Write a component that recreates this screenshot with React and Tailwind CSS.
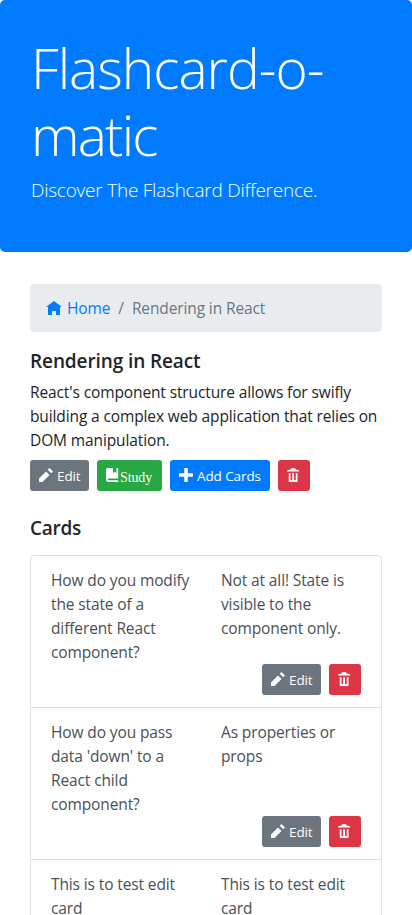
const ICONS = {
  home: "M4 0l-4 3h1v4h2v-2h2v2h2v-4.03l1 .03-4-3z",
  pencil: "M6 0l-1 1 2 2 1-1-2-2zm-2 2l-4 4v2h2l4-4-2-2z",
  book: "M1 0c-.07 0-.13.01-.19.03-.39.08-.7.39-.78.78-.03.06-.03.12-.03.19v5.5c0 .83.67 1.5 1.5 1.5h5.5v-1h-5.5c-.28 0-.5-.22-.5-.5s.22-.5.5-.5h5.5v-5.5c0-.28-.22-.5-.5-.5h-.5v3l-1-1-1 1v-3h-3z",
  plus: "M3 0v3h-3v2h3v3h2v-3h3v-2h-3v-3h-2z",
  trash: "M3 0c-.55 0-1 .45-1 1h-1c-.55 0-1 .45-1 1h7c0-.55-.45-1-1-1h-1c0-.55-.45-1-1-1h-1zm-2 3v4.81c0 .11.08.19.19.19h4.63c.11 0 .19-.08.19-.19v-4.81h-1v3.5c0 .28-.22.5-.5.5s-.5-.22-.5-.5v-3.5h-1v3.5c0 .28-.22.5-.5.5s-.5-.22-.5-.5v-3.5h-1z",
};

function Icon({ name, className }) {
  return (
    <svg viewBox="0 0 8 8" fill="currentColor" className={`shrink-0 ${className}`}>
      <path d={ICONS[name]} />
    </svg>
  );
}

function Button({ icon, label, className, labelClass = "ml-1 mt-0.5 text-[13.5px] tracking-[-0.1px]" }) {
  return (
    <button className={`flex h-[31px] shrink-0 items-start rounded-[3px] pt-1 pl-[9px] text-sm text-white ${className}`}>
      <Icon name={icon} className="mt-1 size-3.5" />
      {label && <span className={`leading-[21px] whitespace-nowrap ${labelClass}`}>{label}</span>}
    </button>
  );
}

const EditButton = () => <Button icon="pencil" label="Edit" className="w-[59px] bg-[#6c757d]" />;
const DeleteButton = () => <Button icon="trash" className="w-8 bg-[#dc3545]" />;

function Lines({ lines }) {
  return lines.map((line) => (
    <span key={line} className="block whitespace-nowrap">{line}</span>
  ));
}

const CARDS = [
  {
    front: ["How do you modify", "the state of a", "different React", "component?"],
    back: ["Not at all! State is", "visible to the", "component only."],
  },
  {
    front: ["How do you pass", "data 'down' to a", "React child", "component?"],
    back: ["As properties or", "props"],
  },
  { front: ["This is to test edit", "card"], back: ["This is to test edit", "card"] },
];

function Card({ front, back }) {
  return (
    <li className="border-b border-[#dfdfdf] px-5 pt-3 pb-3 text-[#495057]">
      <div className="grid h-24 grid-cols-[170px_1fr]">
        <p><Lines lines={front} /></p>
        <p><Lines lines={back} /></p>
      </div>
      <div className="flex justify-end gap-2 tracking-normal">
        <EditButton />
        <DeleteButton />
      </div>
    </li>
  );
}

export default function App() {
  return (
    <div className="h-[915px] overflow-hidden bg-white font-['Open_Sans','Noto_Sans',sans-serif] text-[15.5px] leading-6 tracking-[-0.12px] text-[#212529]">
      <header className="h-[252px] rounded-[5px] bg-[#007bff] px-[31px] pt-[34px] text-white">
        <h1 className="mb-[7px] text-[55px] leading-[67.2px] font-light tracking-[-1px]">
          <span className="block whitespace-nowrap">Flashcard-o-</span>
          <span className="block tracking-[-1.8px] whitespace-nowrap">matic</span>
        </h1>
        <p className="text-[19px] leading-[30px] font-light tracking-[-0.23px]">Discover The Flashcard Difference.</p>
      </header>
      <main className="px-[30px] pt-8">
        <nav className="mb-4 flex h-12 items-center rounded bg-[#e9ecef] px-4">
          <a className="flex items-center text-[#007bff]">
            <Icon name="home" className="mt-0.5 mr-[5px] size-4" />
            Home
          </a>
          <span className="mx-2 text-[#6c757d]">/</span>
          <span className="text-[#6c757d]">Rendering in React</span>
        </nav>
        <h2 className="mb-[7px] pt-px text-[19px] leading-6 font-semibold tracking-[-0.1px]">Rendering in React</h2>
        <p className="mb-2">
          <Lines lines={["React's component structure allows for swifly", "building a complex web application that relies on", "DOM manipulation."]} />
        </p>
        <div className="flex gap-2">
          <EditButton />
          <Button icon="book" label="Study" className="w-[65px] bg-[#28a745]" labelClass="mt-[3px] font-['Liberation_Serif',serif]" />
          <Button icon="plus" label="Add Cards" className="w-[100px] bg-[#007bff]" />
          <DeleteButton />
        </div>
        <h2 className="mt-6 mb-[15px] pt-px text-[19px] leading-6 font-semibold tracking-[-0.25px]">Cards</h2>
        <ul className="rounded border border-[#dfdfdf]">
          {CARDS.map((card) => (
            <Card key={card.front[0]} {...card} />
          ))}
        </ul>
      </main>
    </div>
  );
}
